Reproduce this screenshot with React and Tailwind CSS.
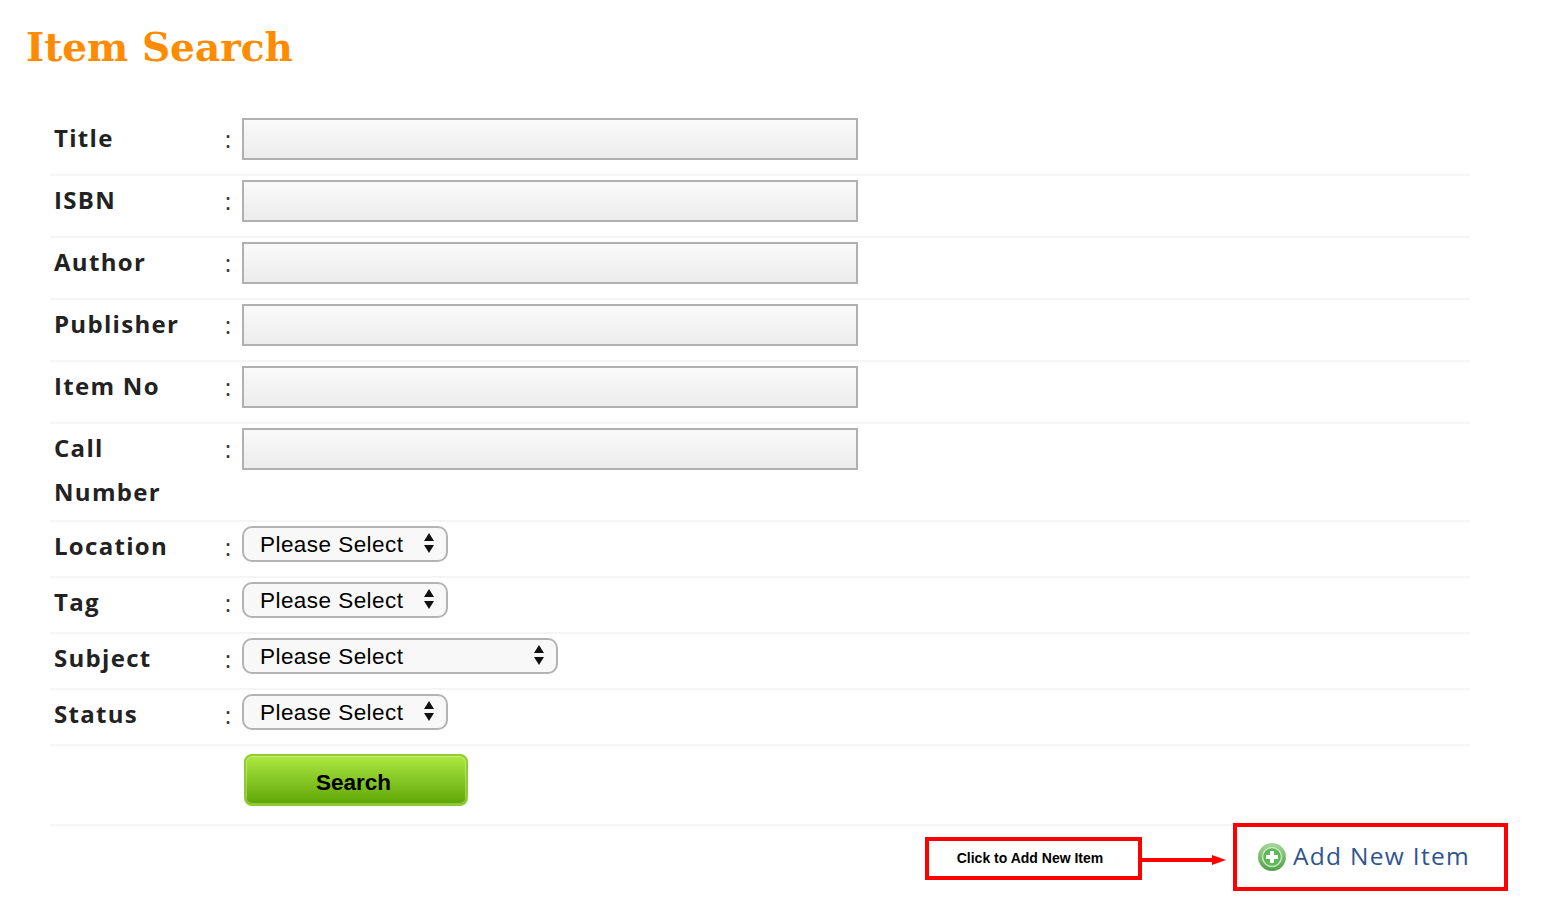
import React from 'react';

const textFields = ['Title', 'ISBN', 'Author', 'Publisher', 'Item No', 'Call Number'];
const selectFields = [
  { label: 'Location', width: 'w-[206px]' },
  { label: 'Tag', width: 'w-[206px]' },
  { label: 'Subject', width: 'w-[316px]' },
  { label: 'Status', width: 'w-[206px]' },
];

const Label = ({ children }) => (
  <>
    <label className="w-[130px] shrink-0 -translate-y-[2px] font-['Open_Sans',sans-serif] text-[24px] font-bold leading-[44px] tracking-[1.3px] text-[#222]">
      {children}
    </label>
    <span className="ml-[41px] w-[17px] shrink-0 -translate-y-[1px] font-['Open_Sans',sans-serif] text-[23px] leading-[44px] text-[#333]">
      :
    </span>
  </>
);

const SortArrows = () => (
  <svg width="12" height="22" viewBox="0 0 12 22" className="absolute right-[13px] top-[6px]">
    <path d="M6 1 L11 9 H1 Z" fill="#111" />
    <path d="M6 21 L1 13 H11 Z" fill="#111" />
  </svg>
);

const App = () => {
  return (
    <div className="min-h-[924px] bg-white font-['Liberation_Sans',sans-serif]">
      <h1 className="pl-[26px] pt-[20px] font-['DejaVu_Serif',serif] text-[39px] font-bold leading-[54px] text-[#ff8c00]">
        Item Search
      </h1>

      <div className="ml-[50px] mt-[40px] w-[1420px]">
        {textFields.map((name) => (
          <div key={name} className="flex items-start border-b-2 border-[#f5f5f5] px-[4px] py-[4px]">
            <Label>{name}</Label>
            <input
              type="text"
              className="mb-[10px] h-[42px] w-[616px] border-2 border-[#b0b0b0] bg-gradient-to-b from-[#fafafa] to-[#ececec]"
            />
          </div>
        ))}

        {selectFields.map((f) => (
          <div key={f.label} className="flex items-start border-b-2 border-[#f5f5f5] px-[4px] py-[4px]">
            <Label>{f.label}</Label>
            <div className={`relative mb-[10px] h-[36px] ${f.width}`}>
              <select className="h-full w-full appearance-none rounded-[10px] border-2 border-[#b4b4b4] bg-[#f8f8f8] pl-[16px] text-[22.5px] tracking-[0.45px] text-black">
                <option>Please Select</option>
              </select>
              <SortArrows />
            </div>
          </div>
        ))}

        <div className="border-b-2 border-[#f5f5f5] pb-[18px] pl-[194px] pt-[8px]">
          <button className="h-[52px] w-[224px] rounded-[8px] border-2 border-[#8fca2e] bg-gradient-to-b from-[#ade93f] to-[#5fa600] pr-[5px] pt-[5px] text-[22.5px] font-bold text-black shadow-[inset_0_0_0_1px_rgba(255,255,255,0.3)]">
            Search
          </button>
        </div>
      </div>

      <div className="mr-[38px] mt-[-3px] flex items-center justify-end">
        <div className="mt-[2px] flex h-[43px] w-[217px] items-center justify-center border-4 border-[#ff0000] pr-[7px] font-bold">
          <span className="text-[14px] text-black">Click to Add New Item</span>
        </div>
        <svg width="91" height="12" viewBox="0 0 91 12" className="mt-[6px] shrink-0">
          <rect x="0" y="4" width="72" height="4" fill="#ff0000" />
          <path d="M70 1 L84 6 L70 11 Z" fill="#ff0000" />
        </svg>
        <div className="flex h-[68px] w-[275px] items-center border-4 border-[#ff0000] pl-[20px]">
          <svg width="30" height="30" viewBox="0 0 30 30" className="shrink-0">
            <defs>
              <linearGradient id="plusRing" x1="0" y1="0" x2="0" y2="1">
                <stop offset="0" stopColor="#a5d898" />
                <stop offset="1" stopColor="#4f9f4b" />
              </linearGradient>
            </defs>
            <circle cx="15" cy="15" r="14" fill="url(#plusRing)" />
            <circle cx="15" cy="15" r="9.5" fill="#62b65a" stroke="#c6e6bd" strokeWidth="1.5" />
            <path d="M13 9h4v4h4v4h-4v4h-4v-4h-4v-4h4z" fill="#fff" />
          </svg>
          <a className="mb-[2px] ml-[6px] font-['Open_Sans',sans-serif] text-[24.5px] leading-none tracking-[1.3px] text-[#2f5590]">
            Add New Item
          </a>
        </div>
      </div>
    </div>
  );
};

export default App;
